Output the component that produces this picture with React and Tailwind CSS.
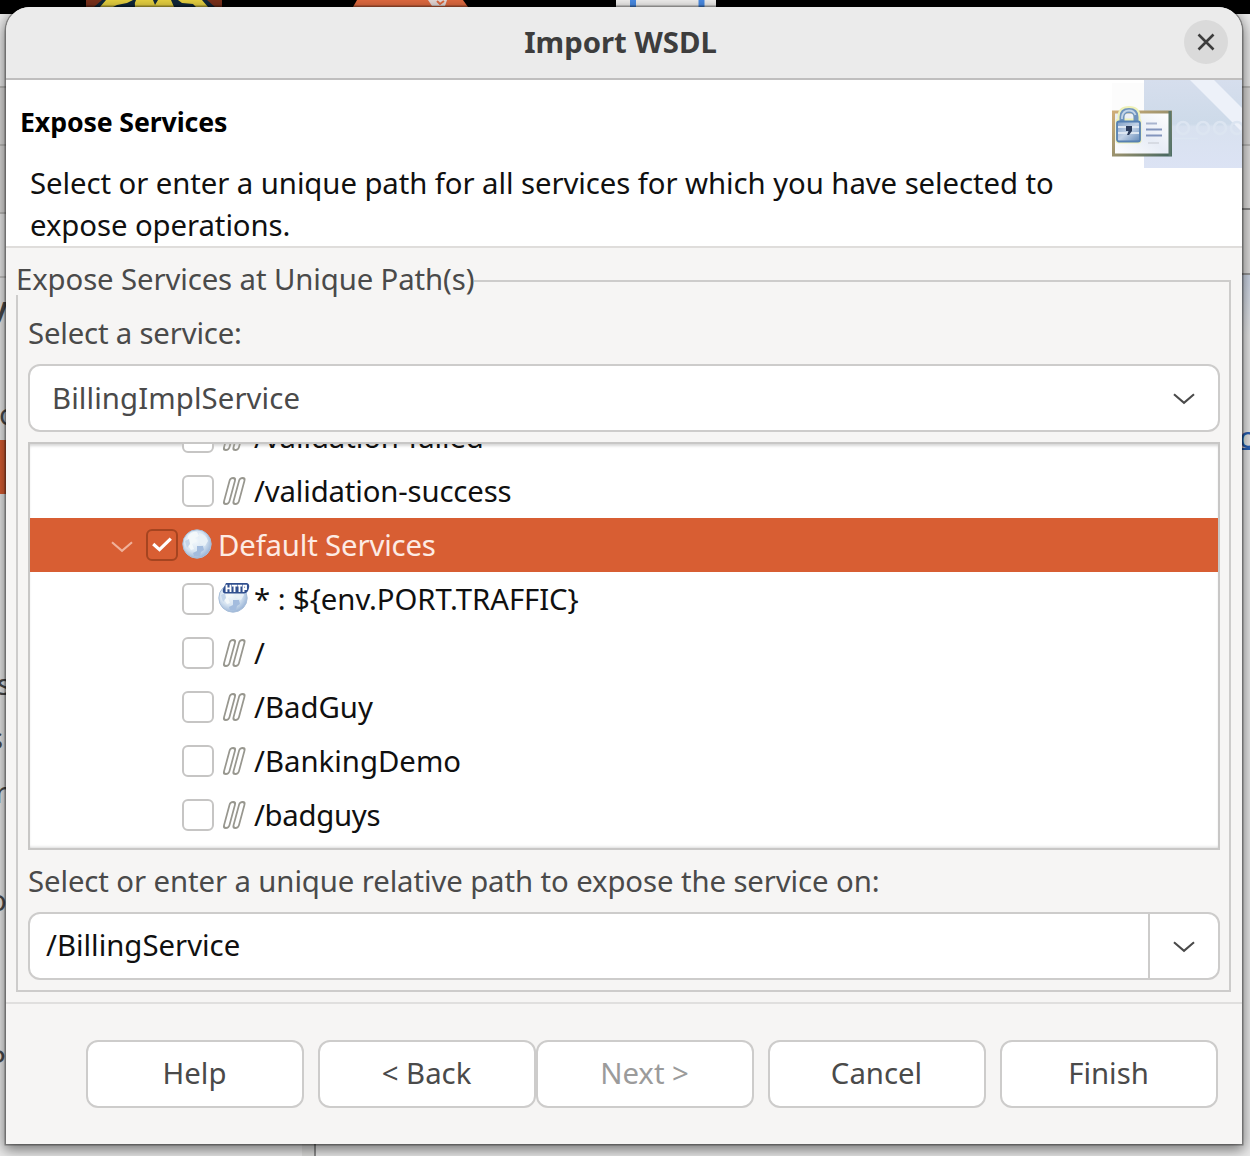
import React from "react";

const Chevron = ({ className }) => (
  <svg className={className} viewBox="0 0 22 12" fill="none" stroke="currentColor" strokeWidth="2.1" strokeLinejoin="miter">
    <path d="M1 1.2 L11 9.8 L21 1.2" />
  </svg>
);

const Globe = ({ id }) => (
  <>
    <defs>
      <radialGradient id={id} cx="0.42" cy="0.38" r="0.62">
        <stop offset="0" stopColor="#f4f9fc" />
        <stop offset="0.6" stopColor="#d8e5f2" />
        <stop offset="1" stopColor="#9db7d8" />
      </radialGradient>
    </defs>
    <circle cx="15" cy="15" r="14.2" fill={`url(#${id})`} stroke="#a9bfda" strokeWidth="1" />
    <path d="M6 7 Q10 2 15 3 L17 7 L13 9 L15 12 L10 15 L12 20 L9 21 L5 15 Z" fill="#f3f8fa" />
    <path d="M17 4 Q24 5 26 12 L23 17 L18 15 L17 10 Z" fill="#e9f1f7" />
    <path d="M15 17 L21 17 L22 21 L19 23 L18 27 L12 27 L11 24 L15 22 Z" fill="#a3bcde" />
    <path d="M3 12 L7 10 L8 15 L5 19 Z" fill="#c3d5ea" />
  </>
);

const GlobeIcon = () => (
  <svg className="-mt-[2px] h-[30px] w-[30px]" viewBox="0 0 30 30">
    <Globe id="globe" />
  </svg>
);

const HttpIcon = () => (
  <svg className="h-[32px] w-[34px]" viewBox="0 0 34 32">
    <g transform="translate(1 1)">
      <Globe id="globeHttp" />
    </g>
    <path d="M9 1 H30 Q33 2 32 6 Q31 11 27 11.500 H8 Q5 11 6 7 Z" fill="#31508f" />
    <g fill="none" stroke="#fff" strokeWidth="1.9">
      <path d="M9.500 2.800 V10 M13.500 2.800 V10 M9.500 6.400 H13.500" />
      <path d="M15 3.600 H20 M17.500 3.600 V10" />
      <path d="M20.500 3.600 H25 M22.500 3.600 V10" />
      <path d="M26.500 10 V3.600 H29 V7 H26.500" />
    </g>
  </svg>
);

const PathIcon = () => (
  <svg className="-mt-[1px] h-[30px] w-[25px]" viewBox="0 0 25 30" fill="none" stroke="#98978f" strokeWidth="1.8">
    <rect x="-2.700" y="-13" width="5.400" height="26" rx="2.700" transform="translate(7.500 15) skewX(-15)" />
    <rect x="-2.700" y="-13" width="5.400" height="26" rx="2.700" transform="translate(17 15) skewX(-15)" />
  </svg>
);

const Check = ({ on }) =>
  on ? (
    <span className="-mt-[1px] flex h-8 w-8 items-center justify-center rounded-[6px] border-2 border-[#a54420]">
      <svg className="h-[16px] w-[20px]" viewBox="0 0 20 16" fill="none" stroke="#fff" strokeWidth="3.2">
        <path d="M1.200 7 L7.500 12.600 L18.800 1.600" />
      </svg>
    </span>
  ) : (
    <span className="-mt-[1px] block h-8 w-8 rounded-[6px] border-2 border-[#c6c5c4] bg-white" />
  );

const PathRow = ({ children, className = "" }) => (
  <div className="flex h-[54px] shrink-0 items-center pl-[152px]">
    <Check />
    <span className="ml-[8px] mr-[7px] flex">
      <PathIcon />
    </span>
    <span className={className}>{children}</span>
  </div>
);

const Button = ({ children, disabled, className = "" }) => (
  <button
    className={`h-[68px] w-[218px] rounded-[12px] border-2 border-[#cdcccb] bg-white pb-[2px] pr-[1px] ${disabled ? "text-[#9b9b9b]" : "text-[#4a4a4a]"} ${className}`}
  >
    {children}
  </button>
);

const HeaderBanner = () => (
  <svg className="h-[88px] w-[130px]" viewBox="0 0 130 88">
    <defs>
      <linearGradient id="sky" x1="0" y1="0" x2="0" y2="1">
        <stop offset="0" stopColor="#d6deed" />
        <stop offset="0.5" stopColor="#cddae9" />
        <stop offset="0.53" stopColor="#d8e1ef" />
        <stop offset="1" stopColor="#dce3f4" />
      </linearGradient>
      <linearGradient id="frame" x1="0" y1="0" x2="1" y2="1">
        <stop offset="0" stopColor="#cfad78" />
        <stop offset="0.5" stopColor="#9b926d" />
        <stop offset="1" stopColor="#466760" />
      </linearGradient>
      <linearGradient id="paper" x1="0" y1="1" x2="1" y2="0">
        <stop offset="0" stopColor="#fff" />
        <stop offset="0.5" stopColor="#e8edf6" />
        <stop offset="1" stopColor="#fff" />
      </linearGradient>
      <linearGradient id="lock" x1="0" y1="0" x2="1" y2="1">
        <stop offset="0" stopColor="#7f9fc6" />
        <stop offset="0.5" stopColor="#c3d2e6" />
        <stop offset="1" stopColor="#6289b8" />
      </linearGradient>
    </defs>
    <rect x="0" y="3" width="33" height="30" fill="#fcfcfc" />
    <rect x="32" y="0" width="98" height="88" fill="url(#sky)" />
    <path d="M78 0 H102 L130 28 V52 Z" fill="#edf1f9" />
    <g fill="none" stroke="#dce5f1" strokeWidth="2.5">
      <circle cx="71" cy="48" r="6" />
      <circle cx="91" cy="48" r="6" />
      <circle cx="108" cy="48" r="6" />
      <circle cx="125" cy="48" r="6" />
      <path d="M62 58.500 H86" strokeWidth="1.500" />
    </g>
    <rect x="1.500" y="32" width="57" height="43" fill="url(#paper)" stroke="url(#frame)" strokeWidth="3" />
    <path d="M58 31 V76" stroke="#5b776b" strokeWidth="3" />
    <g strokeWidth="1.800" stroke="#8395bd">
      <path d="M34 43.500 H45" stroke="#a9b5cf" />
      <path d="M34 49.500 H50" />
      <path d="M34 55.500 H50" />
      <path d="M36 63 H47" stroke="#d7dbe3" />
    </g>
    <path d="M9 40 V37 Q9 29.500 17 29.500 Q25 29.500 25 37 V40" fill="none" stroke="#eef1b8" strokeWidth="7" />
    <rect x="3.500" y="38.500" width="26" height="25" rx="3" fill="#eef1b8" />
    <path d="M10 41 V37 Q10 30.500 17 30.500 Q24 30.500 24 37 V41" fill="none" stroke="#6f93bd" strokeWidth="5" />
    <path d="M10 39 V37 Q11 30.500 17 30.500 Q22 30.500 23.500 35" fill="none" stroke="#c3d5e8" strokeWidth="1.800" />
    <rect x="5" y="41.500" width="23" height="20" rx="2" fill="url(#lock)" stroke="#5580b2" strokeWidth="1.800" />
    <path d="M6 47 H27 M6 53 H27" stroke="#dde6f1" strokeWidth="2" />
    <path d="M14 46 H20 V51 L17 55 H15 L16.500 51 H14 Z" fill="#2c3c5b" />
  </svg>
);

/* Slivers of the desktop and of the window behind the dialog */
const Desktop = () => (
  <div className="absolute inset-0 overflow-hidden bg-[#ebebeb]">
    <div className="h-[14px] bg-black">
      <svg className="h-[14px] w-[1250px]" viewBox="0 0 1250 14">
        <rect x="86" y="0" width="136" height="14" fill="#7d321c" />
        <path d="M94 7 L102 0 H207 L215 7 Z" fill="#10283b" />
        <path d="M100 7 L106 0 H133 L127 3 L117 5 L113 7 Z M135 7 Q134 3 136 0 H153 L155 5 L158 0 H171 L174 7 Z M178 0 H202 L208 7 H196 L193 4 L182 3 Z" fill="#ead441" />
        <path d="M353 7 L357 0 H463 L468 7 Z" fill="#e36b40" />
        <path d="M428 0 H447 L445 6 H432 Z" fill="#e8dcda" />
        <path d="M437 1 L440 4 L444 1" stroke="#e36b40" strokeWidth="2" fill="none" />
        <rect x="616" y="0" width="100" height="8" fill="#f3f2f1" />
        <path d="M633 0 V8 M701.500 0 V8" stroke="#4a8de8" strokeWidth="6" />
      </svg>
    </div>
    <div className="absolute left-0 top-[86px] h-[128px] w-[6px] border-y-2 border-[#bdbcba] bg-[#dcdbda]" />
    <div className="absolute left-0 top-[144px] h-[2px] w-[6px] bg-[#bdbcba]" />
    <div className="absolute left-0 top-[276px] h-[2px] w-[6px] bg-[#c7c6c5]" />
    <div className="absolute left-0 top-[440px] h-[54px] w-[6px] bg-[#d85e33]" />
    <div className="absolute left-[-9px] top-[286px] font-bold">y</div>
    <div className="absolute left-[-1px] top-[393px]">o</div>
    <div className="absolute left-[-3px] top-[663px]">s</div>
    <div className="absolute left-[-11px] top-[717px]">s</div>
    <div className="absolute left-[-5px] top-[771px]">r</div>
    <div className="absolute left-[-11px] top-[879px]">o</div>
    <div className="absolute left-[-12px] top-[1039px]">P</div>
    <div className="absolute left-[1242px] top-[86px] h-[60px] w-[8px] border-y-2 border-[#bdbcba] bg-[#dcdbda]" />
    <div className="absolute left-[1242px] top-[146px] h-[64px] w-[8px] border-b-2 border-[#8a8a8a] bg-[#e2e1e0]" />
    <div className="absolute left-[1242px] top-[210px] h-[65px] w-[8px] border-b-2 border-[#999] bg-[#e2e1e0]" />
    <div className="absolute left-[1242px] top-[275px] h-[60px] w-[8px] bg-gradient-to-b from-[#cfd8e8] to-[#ebebeb]" />
    <div className="absolute left-[1239px] top-[416px] h-[34px] border-b-2 border-[#2a62b8] text-[#2a62b8]">c</div>
    <div className="absolute left-[302px] top-[1140px] h-[16px] w-[14px] border-r-2 border-[#8f8f8f] bg-[#dededd]" />
  </div>
);

export default function App() {
  return (
    <div className="relative h-[1156px] w-[1250px] overflow-hidden font-['Noto_Sans',sans-serif] text-[29.33px] leading-[42px] text-[#4a4a4a]">
      <Desktop />
      <div className="relative ml-[6px] mt-[7px] flex h-[1137px] w-[1236px] flex-col overflow-hidden rounded-t-[24px] bg-[#f6f5f4] shadow-[0_0_0_1.5px_rgba(0,0,0,0.32),0_4px_14px_2px_rgba(0,0,0,0.5)]">
        <header className="flex h-[73px] shrink-0 items-center border-b-2 border-[#bfbebe] bg-[#ebebeb] pb-[1px] pr-[14px]">
          <h1 className="flex-1 pl-[51px] text-center font-bold text-[#3d3d3d]">Import WSDL</h1>
          <button className="flex h-[44px] w-[44px] items-center justify-center rounded-full bg-[#dadada]">
            <svg className="h-[18px] w-[18px]" viewBox="0 0 18 18" stroke="#3d3d3d" strokeWidth="2.600" fill="none">
              <path d="M1.500 1.500 L16.500 16.500 M16.500 1.500 L1.500 16.500" />
            </svg>
          </button>
        </header>

        <section className="flex h-[168px] shrink-0 justify-between border-b-2 border-[#dfdddb] bg-white text-[#101010]">
          <div>
            <h2 className="ml-[14px] mt-[21px] text-[26.700px] font-bold tracking-[-0.12px] text-black">Expose Services</h2>
            <p className="ml-[24px] mt-[19px] w-[1060px] tracking-[-0.075px]">
              Select or enter a unique path for all services for which you have selected to
              <br />
              expose operations.
            </p>
          </div>
          <HeaderBanner />
        </section>

        <main className="h-[754px] shrink-0 px-[10px] pt-[32px]">
          <section className="relative h-[712px] w-[1215px] border-2 border-[#cdcccb] pl-[10px] pr-[9.500px] pt-[30px]">
            <h3 className="absolute left-[-2px] top-[-19px] h-[32px] whitespace-nowrap bg-[#f6f5f4] leading-[32px] tracking-[-0.11px]">
              Expose Services at Unique Path(s)
            </h3>
            <div className="tracking-[-0.18px]">Select a service:</div>
            <div className="mt-[10px] flex h-[68px] items-center justify-between rounded-[12px] border-2 border-[#cdcccb] bg-white pb-[1px] pl-[22px] pr-[22.500px]">
              <span className="tracking-[0.1px]">BillingImplService</span>
              <Chevron className="mt-[3px] h-[12px] w-[22px]" />
            </div>
            <div className="mt-[10px] flex h-[408px] flex-col overflow-hidden border-2 border-[#c8c7c6] bg-white text-[#101010] shadow-[inset_0_3px_3px_-1px_rgba(0,0,0,0.16),inset_0_-3px_3px_-2px_rgba(0,0,0,0.15)]">
              <div className="-mt-[34px]">
                <PathRow className="tracking-[-0.1px]">/validation-failed</PathRow>
              </div>
              <PathRow className="tracking-[-0.15px]">/validation-success</PathRow>
              <div className="flex h-[54px] shrink-0 items-center bg-[#d85e33] pl-[81px] text-[#fdebe4]">
                <Chevron className="mt-[3px] h-[12px] w-[22px] text-[#f0b19a]" />
                <span className="ml-[13px] mr-[4px]">
                  <Check on />
                </span>
                <GlobeIcon />
                <span className="ml-[6px] tracking-[-0.16px]">Default Services</span>
              </div>
              <div className="flex h-[54px] shrink-0 items-center pl-[152px]">
                <Check />
                <span className="-mt-[2px] ml-[3px] mr-[3px] flex">
                  <HttpIcon />
                </span>
                <span className="tracking-[-0.06px]">{"* : ${env.PORT.TRAFFIC}"}</span>
              </div>
              <PathRow>/</PathRow>
              <PathRow>/BadGuy</PathRow>
              <PathRow>/BankingDemo</PathRow>
              <PathRow className="tracking-[-0.3px]">/badguys</PathRow>
            </div>
            <div className="mt-[10px] tracking-[-0.1px]">Select or enter a unique relative path to expose the service on:</div>
            <div className="mt-[10px] flex h-[68px] overflow-hidden rounded-[12px] border-2 border-[#cdcccb] bg-white">
              <span className="flex flex-1 items-center border-r-2 border-[#cdcccb] pb-[2px] pl-[16px] text-[#101010]">/BillingService</span>
              <span className="flex w-[67.500px] items-center justify-center">
                <Chevron className="mt-[2px] h-[12px] w-[22px]" />
              </span>
            </div>
          </section>
        </main>

        <footer className="flex flex-1 justify-end border-t-2 border-[#e0dfde] pr-[24px] pt-[36px]">
          <Button>Help</Button>
          <Button className="ml-[14px]">&lt; Back</Button>
          <Button disabled>Next &gt;</Button>
          <Button className="ml-[14px]">Cancel</Button>
          <Button className="ml-[14px]">Finish</Button>
        </footer>
      </div>
    </div>
  );
}
